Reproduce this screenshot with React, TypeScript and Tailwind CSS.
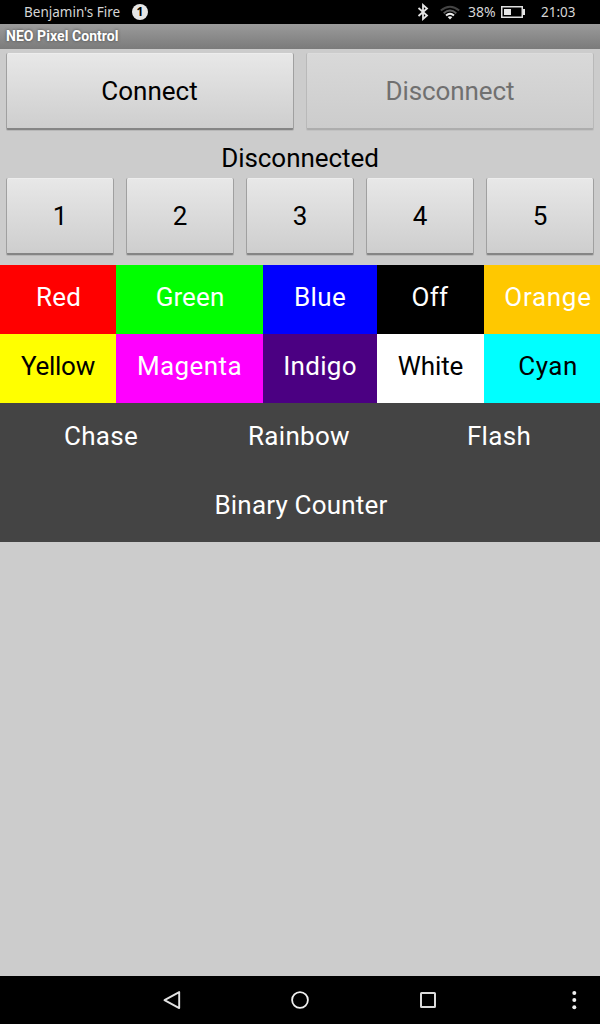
import type { ReactNode } from "react";

function StatusBar() {
  return (
    <div className="flex h-6 shrink-0 items-center bg-black pl-6 font-['Noto_Sans',sans-serif] text-[13px] leading-6 text-[#d6d6d6]">
      <span className="w-[108px] text-[13.500px] whitespace-nowrap">Benjamin's Fire</span>
      <span className="flex size-4 items-center justify-center rounded-full bg-[#e6e6e6] text-[12px] leading-4 font-bold text-black">
        1
      </span>
      <svg className="ml-[269px] h-[18px] w-3" viewBox="0 0 12 18" fill="none" stroke="#e4e4e4" strokeWidth="1.8">
        <path d="M1.500 5 10 12.500 6 16V2l4 3.500L1.500 13" />
      </svg>
      <svg className="ml-[11px] h-[15px] w-5" viewBox="0 0 20 15" fill="none" strokeWidth="1.9">
        <path d="M.8 5.500Q10-2.200 19.200 5.500" stroke="#444" />
        <path d="M3.700 8.200Q10 2.900 16.300 8.200" stroke="#606060" />
        <path d="M6 10.500Q10 6.800 14 10.500" stroke="#eee" />
        <path d="m7.600 12 2.400 2.500 2.400-2.500Q10 10.300 7.600 12Z" fill="#eee" />
      </svg>
      <span className="ml-2 w-[33px] text-[14px] whitespace-nowrap">38%</span>
      <svg className="h-3 w-6" viewBox="0 0 24 12" fill="none">
        <path d="M.75.75h20.500v10.500H.75z" stroke="#dedede" strokeWidth="1.5" />
        <path d="M3 3h7v6H3zM22 3h2v6h-2z" fill="#e6e6e6" />
      </svg>
      <span className="ml-4 text-[13.500px] whitespace-nowrap">21:03</span>
    </div>
  );
}

function PushButton({ children, disabled = false }: { children: ReactNode; disabled?: boolean }) {
  return (
    <button
      disabled={disabled}
      className="h-[77px] min-w-0 flex-1 rounded-[2px] border-x border-b-2 border-[#a0a0a0] border-b-[#858585] bg-linear-to-b from-[#e8e8e8] to-[#cecece] shadow-[0_1px_0_#b8b8b8,inset_0_1px_0_#ededed] disabled:border-[#b9b9b9] disabled:border-b-[#adadad] disabled:from-[#d9d9d9] disabled:to-[#cccccc] disabled:text-[#707070] disabled:shadow-[0_1px_0_#c2c2c2,inset_0_1px_0_#dcdcdc]"
    >
      {children}
    </button>
  );
}

const swatches = [
  { label: "Red", style: "bg-[#ff0000] text-white tracking-[0.2px] pl-px" },
  { label: "Green", style: "bg-[#00ff00] text-white tracking-[0.1px] pl-px" },
  { label: "Blue", style: "bg-[#0000ff] text-white tracking-[0.4px]" },
  { label: "Off", style: "bg-black text-white tracking-[0.3px] pr-px" },
  { label: "Orange", style: "bg-[#ffc800] text-white tracking-[0.7px]" },
  { label: "Yellow", style: "bg-[#ffff00] text-black tracking-[-0.3px]" },
  { label: "Magenta", style: "bg-[#ff00ff] text-white tracking-[0.4px]" },
  { label: "Indigo", style: "bg-[#4b0082] text-white tracking-[0.3px]" },
  { label: "White", style: "bg-white text-black tracking-[-0.1px]" },
  { label: "Cyan", style: "bg-[#00ffff] text-black tracking-[0.5px]" },
];

function SystemNav() {
  return (
    <div className="flex h-12 shrink-0 items-center bg-black">
      <svg className="ml-[162px] h-5 w-5" viewBox="0 0 20 20" fill="none" stroke="#e2e2e2" strokeWidth="1.9">
        <path d="M17.200 2.100v16L2.500 10.100Z" strokeLinejoin="round" />
      </svg>
      <svg className="ml-[108px] h-5 w-5" viewBox="0 0 20 20" fill="none" stroke="#f0f0f0" strokeWidth="1.8">
        <circle cx="10" cy="10" r="7.900" />
      </svg>
      <svg className="ml-[108px] h-5 w-5" viewBox="0 0 20 20" fill="none" stroke="#dcdcdc" strokeWidth="2">
        <rect x="3" y="3" width="14" height="14" rx=".5" />
      </svg>
      <svg className="ml-[132px] h-5 w-2" viewBox="0 0 8 20" fill="#f0f0f0">
        <circle cx="4.300" cy="3" r="2" />
        <circle cx="4.300" cy="10" r="2" />
        <circle cx="4.300" cy="17.200" r="2" />
      </svg>
    </div>
  );
}

export default function App() {
  return (
    <div className="flex h-[1024px] w-[600px] flex-col overflow-hidden bg-[#cccccc] font-[Roboto,sans-serif] text-[26px] leading-[30px] text-black">
      <StatusBar />
      <header className="h-[25px] shrink-0 bg-linear-to-b from-[#9b9b9b] to-[#7b7b7b] pl-1.5 text-[14px] leading-[25px] font-bold tracking-[0.06px] text-white [text-shadow:0_0_3px_#404040]">
        NEO Pixel Control
      </header>
      <div className="flex shrink-0 gap-3 px-1.5 pt-1">
        <PushButton>
          <span className="pr-px">Connect</span>
        </PushButton>
        <PushButton disabled>
          <span className="tracking-[-0.1px]">Disconnect</span>
        </PushButton>
      </div>
      <div className="h-12 shrink-0 pt-[13px] text-center tracking-[-0.05px]">Disconnected</div>
      <div className="flex h-[87px] shrink-0 items-start gap-3 px-1.5">
        {[1, 2, 3, 4, 5].map((n) => (
          <PushButton key={n}>{n}</PushButton>
        ))}
      </div>
      <div className="grid shrink-0 grid-cols-[116px_147px_114px_107px_128px] grid-rows-[69px_69px]">
        {swatches.map(({ label, style }) => (
          <div key={label} className={`${style} pt-[17px] text-center`}>
            {label}
          </div>
        ))}
      </div>
      <div className="h-[139px] shrink-0 bg-[#444444] text-center tracking-[0.3px] text-white">
        <div className="grid h-[69px] grid-cols-3 pt-[18px]">
          <span className="pl-0.5">Chase</span>
          <span className="pr-0.5">Rainbow</span>
          <span className="pr-0.5">Flash</span>
        </div>
        <div className="pt-[18px] pl-0.5 tracking-[0.2px]">Binary Counter</div>
      </div>
      <main className="flex-1" />
      <SystemNav />
    </div>
  );
}
